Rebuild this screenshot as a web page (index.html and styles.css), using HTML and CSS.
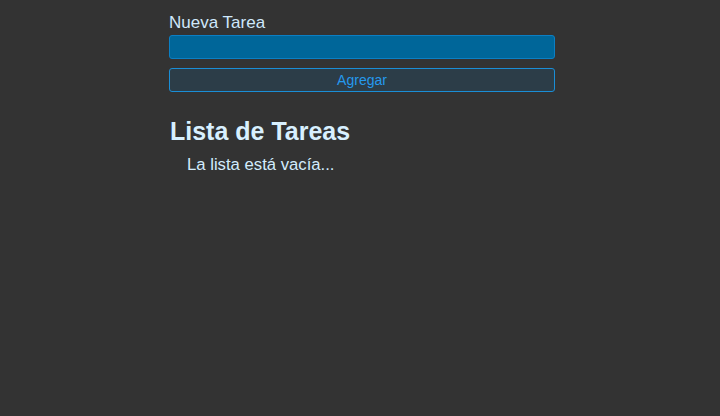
FILE: index.html
```html
<!DOCTYPE html>
<html lang="es">
<head>
<meta charset="utf-8">
<title>Tareas</title>
<link rel="stylesheet" href="styles.css">
</head>
<body>
<main class="app">
  <form class="form">
    <label class="label" for="tarea">Nueva Tarea</label>
    <input class="input" id="tarea" type="text">
    <button class="btn" type="button">Agregar</button>
  </form>
  <h2 class="title">Lista de Tareas</h2>
  <p class="empty">La lista está vacía...</p>
</main>
</body>
</html>
```
FILE: styles.css
```css
html, body {
  margin: 0;
  background: #333333;
  font-family: "Liberation Sans", Arial, sans-serif;
}
body {
  padding: 12px 0 0 4px;
}
.app {
  width: 386px;
  margin: 0 auto;
}
.form {
  display: flex;
  flex-direction: column;
}
.label {
  font-size: 17px;
  line-height: 21px;
  color: #cfe8fb;
  margin-bottom: 2px;
}
.input {
  box-sizing: border-box;
  height: 24px;
  margin: 0;
  background: #006699;
  border: 1px solid #0b7fc4;
  border-radius: 3px;
  color: #fff;
  font-family: inherit;
  font-size: 14px;
}
.btn {
  box-sizing: border-box;
  height: 24px;
  margin: 9px 0 0;
  background: #2c3d48;
  border: 1px solid #1a8ed6;
  border-radius: 3px;
  color: #2599ee;
  font-family: inherit;
  font-size: 14px;
  padding: 0;
}
.title {
  margin: 25px 0 0 1px;
  font-size: 25px;
  font-weight: bold;
  color: #d8f0ff;
}
.empty {
  margin: 9px 0 0 18px;
  font-size: 16.7px;
  color: #d2ecfd;
}
```
